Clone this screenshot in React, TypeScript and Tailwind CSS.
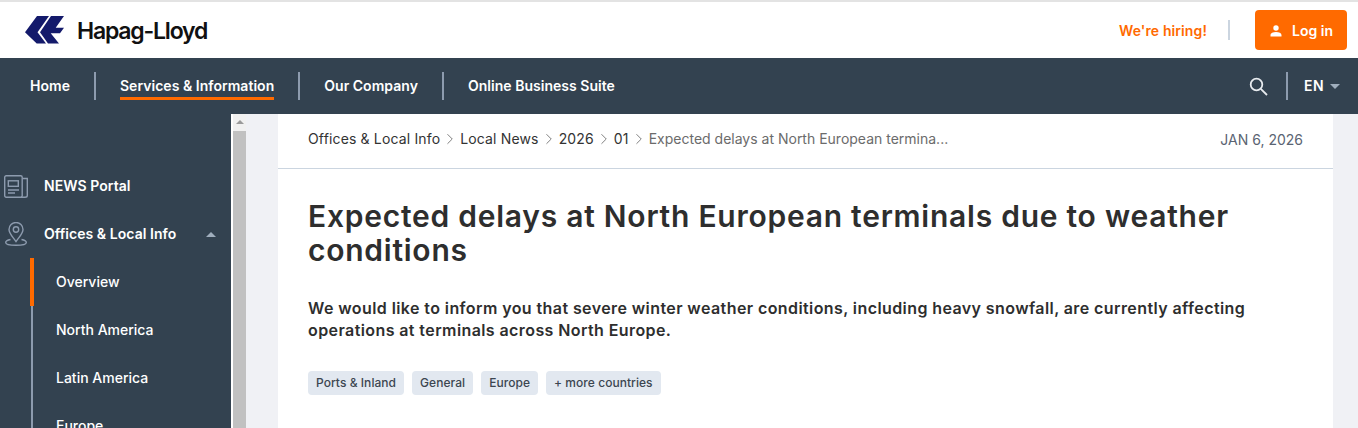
import { ChevronRight } from "lucide-react";

const navItems = ["Home", "Services & Information", "Our Company", "Online Business Suite"];
const subItems = ["Overview", "North America", "Latin America", "Europe"];
const crumbs = ["Offices & Local Info", "Local News", "2026", "01"];
const tags = ["Ports & Inland", "General", "Europe", "+ more countries"];

function Logo() {
  return (
    <svg width="39" height="28" viewBox="0 0 39 28" className="shrink-0">
      <path fill="#141a6b" d="M0 16.300L12 0H24L12.500 16.300L21 27.500H11.700Z" />
      <path fill="#141a6b" d="M26 0H39L30.700 11.700H39L35 17.300H25.700L34 27.500H23L15 16.300Z" />
    </svg>
  );
}

function App() {
  return (
    <div className="h-[428px] w-[1358px] overflow-hidden bg-[#f0f1f5] font-['Inter',sans-serif]">
      <header className="flex h-[58px] items-center justify-between border-t-2 border-[#e3e3e3] bg-white pl-[25px] pr-[11px]">
        <div className="flex items-center gap-[13px]">
          <Logo />
          <span className="pt-[2px] text-[23px] font-semibold tracking-[-1.2px] text-[#111]">Hapag-Lloyd</span>
        </div>
        <div className="flex items-center">
          <a className="pt-[2px] text-sm font-semibold tracking-[0.1px] text-[#ff6a00]">We're hiring!</a>
          <div className="ml-[21px] mr-[25px] h-5 w-0.5 bg-[#cbd5e0]" />
          <button className="flex h-10 w-[92px] items-center justify-center gap-[10px] rounded bg-[#ff6a00] pl-px pt-[1px] text-sm font-semibold text-white">
            <svg width="12" height="12" viewBox="0 0 12 12" fill="white">
              <circle cx="6" cy="3" r="2.7" />
              <path d="M0.5 11.5V10C0.5 8 3 7 6 7S11.500 8 11.500 10V11.500Z" />
            </svg>
            Log in
          </button>
        </div>
      </header>

      <nav className="flex h-14 items-center justify-between bg-[#334250] pl-[30px] pr-[18px]">
        <ul className="flex items-center">
          {navItems.map((item, i) => (
            <li key={item} className="flex items-center">
              {i > 0 && <div className="mx-6 h-7 w-0.5 bg-[#8d9bae]" />}
              <a
                className={
                  "flex h-7 items-center text-sm font-semibold tracking-[0.03px] text-white " +
                  (i === 1 ? "border-b-[3px] border-[#ff6a00] pt-[3px]" : "")
                }
              >
                {item}
              </a>
            </li>
          ))}
        </ul>
        <div className="flex items-center">
          <svg width="19" height="19" viewBox="0 0 19 19" fill="none" stroke="#e8ebef" strokeWidth="1.800">
            <circle cx="7.500" cy="7.500" r="5.800" />
            <path d="M11.800 11.800L18 18" />
          </svg>
          <div className="ml-[18px] mr-4 h-7 w-0.5 bg-[#8d9bae]" />
          <span className="text-sm font-semibold tracking-[0.4px] text-white">EN</span>
          <div className="ml-[6px] border-x-[5px] border-t-[5px] border-x-transparent border-t-[#a0aebd]" />
        </div>
      </nav>

      <div className="flex h-[314px]">
        <aside className="h-full w-[231px] shrink-0 overflow-hidden bg-[#334250] pt-12">
          <div className="flex h-12 items-center">
            <svg width="24" height="23" viewBox="0 0 24 23" fill="none" stroke="#8d9bae" strokeWidth="1.4" className="ml-1 mr-4 shrink-0">
              <rect x="0.700" y="0.700" width="17.500" height="21.600" rx="1.500" />
              <path d="M18.500 3.500H23.300V20.500C23.300 21.700 22.300 22.300 21 22.300H17" />
              <rect x="4.300" y="5.800" width="10" height="5.500" />
              <path d="M4 15H15M4 18H11" strokeWidth="1.600" />
            </svg>
            <span className="text-sm font-semibold tracking-[0.05px] text-white">NEWS Portal</span>
          </div>
          <div className="flex h-12 items-center">
            <svg width="22" height="24" viewBox="0 0 22 24" fill="none" stroke="#8d9bae" strokeWidth="1.4" className="ml-[5px] mr-[17px] shrink-0">
              <path d="M11 19.500C7.500 14.500 4 11.500 4 7.500A7 7 0 0 1 18 7.500C18 11.500 14.500 14.500 11 19.500Z" />
              <circle cx="11" cy="7.500" r="2.700" />
              <path d="M5.500 17.500C2.800 18 0.700 19.200 0.700 20.500C0.700 22.200 5.500 23.300 11 23.300S21.300 22.200 21.300 20.500C21.300 19.200 19.200 18 16.500 17.500" />
            </svg>
            <span className="text-sm font-semibold tracking-[0.05px] text-white">Offices & Local Info</span>
            <div className="ml-auto mr-[15px] border-x-[5px] border-b-[5px] border-x-transparent border-b-[#a0aebd]" />
          </div>
          <ul className="ml-[31px] border-l-2 border-[#8d9bae]">
            {subItems.map((item, i) => (
              <li
                key={item}
                className={
                  "flex h-12 items-center text-sm font-medium text-white " +
                  (i === 0 ? "-ml-[3px] border-l-4 border-[#ff6a00] pl-[22px]" : "pl-[23px]")
                }
              >
                {item}
              </li>
            ))}
          </ul>
        </aside>
        <div className="h-full w-0.5 shrink-0 bg-white" />
        <div className="flex h-full w-[13px] shrink-0 flex-col items-center bg-[#f1f1f1]">
          <div className="mt-[6px] border-x-[4px] border-b-[4px] border-x-transparent border-b-[#9a9a9a]" />
          <div className="mt-[7px] h-full w-full bg-[#c1c1c1]" />
        </div>
        <div className="w-8 shrink-0" />
        <main className="h-full w-[1055px] bg-white">
          <div className="flex h-[55px] items-center justify-between border-b border-[#cbd5e0] px-[30px] pb-[3px] text-sm text-[#333]">
            <div className="flex items-center pb-px">
              {crumbs.map((crumb) => (
                <span key={crumb} className="flex items-center tracking-[0.15px]">
                  {crumb}
                  <ChevronRight size={18} strokeWidth={1.25} className="mx-px text-[#777]" />
                </span>
              ))}
              <span className="text-[#6b6b6b]">Expected delays at North European termina...</span>
            </div>
            <span className="text-sm text-[#5a6472]">JAN 6, 2026</span>
          </div>
          <div className="pl-[30px] pr-[80px] pt-[30px]">
            <h1 className="text-[30px] font-semibold leading-[34px] tracking-[0.75px] text-[#2e2e2e]">
              Expected delays at North European terminals due to weather conditions
            </h1>
            <p className="mt-[30px] text-base font-semibold leading-[22px] tracking-[0.41px] text-[#2e2e2e]">
              We would like to inform you that severe winter weather conditions, including heavy snowfall, are currently affecting operations at terminals across North Europe.
            </p>
            <div className="mt-[30px] flex gap-2">
              {tags.map((tag) => (
                <span key={tag} className="flex h-6 items-center rounded bg-[#e2e8f0] px-2 text-xs font-medium tracking-[0.05px] text-[#3c4650]">
                  {tag}
                </span>
              ))}
            </div>
          </div>
        </main>
      </div>
    </div>
  );
}

export default App;
